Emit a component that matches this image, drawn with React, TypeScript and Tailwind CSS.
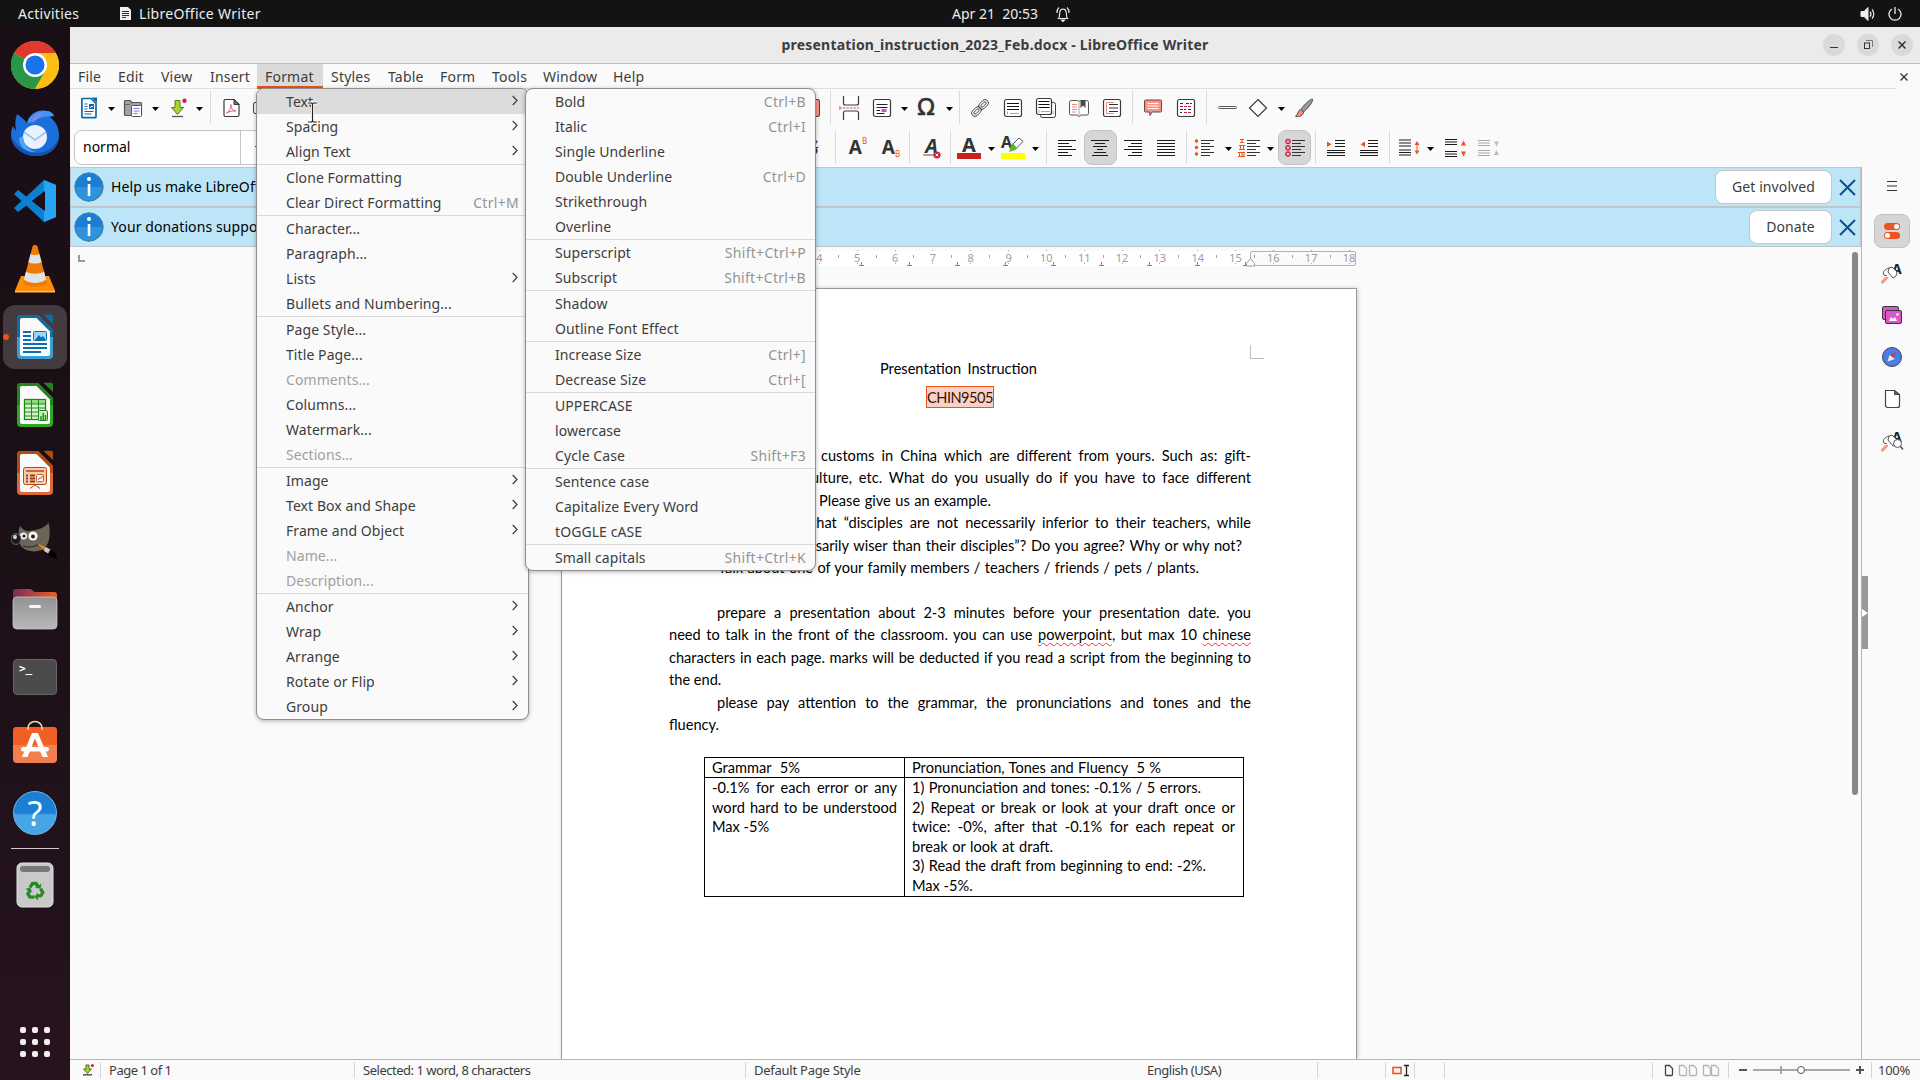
import type { ReactNode } from "react";

type Entry = { label: string; keys?: string; sub?: boolean; off?: boolean; on?: boolean };

const formatMenu: Entry[][] = [
  [
    { label: "Text", sub: true, on: true },
    { label: "Spacing", sub: true },
    { label: "Align Text", sub: true },
  ],
  [{ label: "Clone Formatting" }, { label: "Clear Direct Formatting", keys: "Ctrl+M" }],
  [
    { label: "Character..." },
    { label: "Paragraph..." },
    { label: "Lists", sub: true },
    { label: "Bullets and Numbering..." },
  ],
  [
    { label: "Page Style..." },
    { label: "Title Page..." },
    { label: "Comments...", off: true },
    { label: "Columns..." },
    { label: "Watermark..." },
    { label: "Sections...", off: true },
  ],
  [
    { label: "Image", sub: true },
    { label: "Text Box and Shape", sub: true },
    { label: "Frame and Object", sub: true },
    { label: "Name...", off: true },
    { label: "Description...", off: true },
  ],
  [
    { label: "Anchor", sub: true },
    { label: "Wrap", sub: true },
    { label: "Arrange", sub: true },
    { label: "Rotate or Flip", sub: true },
    { label: "Group", sub: true },
  ],
];

const textMenu: Entry[][] = [
  [
    { label: "Bold", keys: "Ctrl+B" },
    { label: "Italic", keys: "Ctrl+I" },
    { label: "Single Underline" },
    { label: "Double Underline", keys: "Ctrl+D" },
    { label: "Strikethrough" },
    { label: "Overline" },
  ],
  [
    { label: "Superscript", keys: "Shift+Ctrl+P" },
    { label: "Subscript", keys: "Shift+Ctrl+B" },
  ],
  [{ label: "Shadow" }, { label: "Outline Font Effect" }],
  [
    { label: "Increase Size", keys: "Ctrl+]" },
    { label: "Decrease Size", keys: "Ctrl+[" },
  ],
  [{ label: "UPPERCASE" }, { label: "lowercase" }, { label: "Cycle Case", keys: "Shift+F3" }],
  [{ label: "Sentence case" }, { label: "Capitalize Every Word" }, { label: "tOGGLE cASE" }],
  [{ label: "Small capitals", keys: "Shift+Ctrl+K" }],
];

function Menu({ groups, className }: { groups: Entry[][]; className: string }) {
  return (
    <div
      className={`absolute top-[88px] overflow-hidden rounded-lg border border-[#8f8f8f] bg-[#fafafa] shadow-[0_1px_4px_rgba(0,0,0,0.3)] ${className}`}
    >
      {groups.map((group, i) => (
        <div key={i} className={i > 0 ? "border-t border-[#d9d9d9]" : ""}>
          {group.map((item) => (
            <div
              key={item.label}
              className={`flex h-[25px] items-center justify-between pl-[29px] pr-[9px] ${
                item.on ? "bg-[#dcdcdc]" : ""
              } ${item.off ? "text-[#a0a0a0]" : ""}`}
            >
              <span className="tracking-[0.080px]">{item.label}</span>
              {item.keys && <span className="tracking-[0.300px] text-[#949494]">{item.keys}</span>}
              {item.sub && (
                <svg width="6" height="11" className="mb-[2px] mr-px" fill="none" stroke="#3d3d3d" strokeWidth="1.2">
                  <path d="M.7 1 5 5.500.7 10" />
                </svg>
              )}
            </div>
          ))}
        </div>
      ))}
    </div>
  );
}

/* ---------- toolbar pieces ---------- */

function Slot({ className, children }: { className: string; children?: ReactNode }) {
  return <div className={`flex h-full shrink-0 items-center justify-center ${className}`}>{children}</div>;
}

const Sep = () => <div className="h-[33px] w-px shrink-0 bg-[#dadada]" />;

function Drop({ className }: { className: string }) {
  return (
    <Slot className={className}>
      <svg width="7" height="4" className="mt-[3px] shrink-0">
        <path d="M0 0h7L3.500 4z" fill="#000" />
      </svg>
    </Slot>
  );
}

function Ico({ children, w = 20, h = 20 }: { children: ReactNode; w?: number; h?: number }) {
  return (
    <svg width={w} height={h} viewBox={`0 0 ${w} ${h}`} fill="none" className="shrink-0">
      {children}
    </svg>
  );
}

const ink = "#3a3a3a";

const Frame = () => <rect x="1.500" y="1.500" width="17" height="17" rx="2" fill="#fff" stroke={ink} strokeWidth="1.200" />;

const PdfIcon = () => (
  <Ico>
    <path d="M4 1.500h9l5 5V17a1.500 1.500 0 0 1-1.500 1.500h-12A1.500 1.500 0 0 1 3 17V3a1.500 1.500 0 0 1 1-1.500z" fill="#fff" stroke={ink} strokeWidth="1.200" />
    <path d="M13 1.500v5h5z" fill="#777" stroke={ink} />
    <path d="M5.500 15c2-1 5-5 4.500-8.500-.8 3 1.500 6 5 6.500-3-.5-6.500.3-9.500 2z" stroke="#e8556d" />
  </Ico>
);

const WriterDoc = () => (
  <Ico w={18} h={22}>
    <path d="M2.500 1.500h8.500l5 5V20a.6.6 0 0 1-.6.6H2.500a.6.6 0 0 1-.6-.6V2.100a.6.6 0 0 1 .6-.6z" fill="#fff" stroke="#0a6aa8" strokeWidth="1.700" />
    <path d="M11.500.5H17v5.800z" fill="#0a6aa8" />
    <path d="M4.500 7h3M4.500 9.500h3M4.500 12h3M4.500 14.500h9M4.500 17h7" stroke="#0a6aa8" strokeWidth="1.200" />
    <rect x="9" y="7" width="5" height="5" fill="#0a6aa8" />
    <path d="M10 11l2-2 1 1" stroke="#fff" />
  </Ico>
);

const FolderIcon = () => (
  <Ico>
    <path d="M1.500 16.500v-13a1 1 0 0 1 1-1H7l2 2h8.500a1 1 0 0 1 1 1v11a1 1 0 0 1-1 1h-15a1 1 0 0 1-1-1z" fill="#a3a3a3" stroke="#555" strokeWidth="1.200" />
    <path d="M2 6.500h5l2-2" stroke="#666" />
    <rect x="8.500" y="7.500" width="10" height="11" rx="1" fill="#fff" stroke="#555" />
    <path d="M10.500 10.500h6M10.500 13h6M10.500 15.500h4" stroke="#8079d8" />
  </Ico>
);

const SaveIcon = () => (
  <Ico w={18} h={20}>
    <path d="M5 2.500h5v7h3.500l-6 7-6-7H5z" fill="#a6d52c" stroke="#567a22" strokeWidth="1" />
    <path d="M2 18.500h11" stroke="#555" strokeWidth="1.300" />
    <circle cx="14.500" cy="2.700" r="2.200" fill="#d1203f" />
  </Ico>
);

const BreakIcon = () => (
  <Ico w={22} h={26}>
    <path d="M5.500 1v7a2 2 0 0 0 2 2h11a2 2 0 0 0 2-2V1M5.500 25v-7a2 2 0 0 1 2-2h11a2 2 0 0 1 2 2v7" fill="#fff" stroke={ink} strokeWidth="1.200" />
    <path d="M5 13h16" stroke="#c45fae" strokeDasharray="2.500 1" />
    <path d="M1 10.500v5l3.500-2.500z" fill="#ec8ad8" />
  </Ico>
);

const FieldIcon = () => (
  <Ico>
    <Frame />
    <path d="M4.500 6.500h11M4.500 9.500h11M4.500 12.500h3.500M4.500 15.500h8" stroke="#222" />
    <rect x="9.500" y="11" width="5" height="3" fill="#d54fc4" />
  </Ico>
);

const LinkIcon = () => (
  <Ico>
    <g stroke={ink} strokeWidth=".9" transform="rotate(-45 10 10)">
      <rect x="-.5" y="6.700" width="11" height="6.600" rx="3.300" />
      <rect x="1.800" y="8.800" width="6.500" height="2.400" rx="1.200" />
      <rect x="9.500" y="6.700" width="11" height="6.600" rx="3.300" />
      <rect x="11.700" y="8.800" width="6.500" height="2.400" rx="1.200" />
    </g>
  </Ico>
);

const FootnoteIcon = () => (
  <Ico>
    <Frame />
    <path d="M4 5.500h12M4 8.500h12M4 11.500h12" stroke="#111" strokeWidth="1.200" />
    <path d="M4.500 13.500v3M7 15.500h9" stroke="#f08a7a" />
  </Ico>
);

const EndnoteIcon = () => (
  <Ico w={22} h={22}>
    <rect x="5.500" y="5.500" width="15" height="15" rx="2" fill="#fff" stroke={ink} />
    <rect x="1.500" y="1.500" width="15" height="16" rx="2" fill="#fff" stroke={ink} strokeWidth="1.200" />
    <path d="M3.500 4.500h11M3.500 7.500h11M3.500 10.500h11" stroke="#111" strokeWidth="1.200" />
    <path d="M4 13v3M6 14.500h9M18 14v3" stroke="#f08a7a" />
  </Ico>
);

const BookmarkIcon = () => (
  <Ico w={22} h={20}>
    <path d="M3.500 2.500h6l1.500 1 1.500-1h6a2 2 0 0 1 2 2v11a1.500 1.500 0 0 1-1.500 1.500h-6l-2 1.500L9 17H3a1.500 1.500 0 0 1-1.500-1.500v-11a2 2 0 0 1 2-2z" fill="#fff" stroke="#555" />
    <path d="M11 4v13" stroke="#aaa" />
    <path d="M4 6.500h5M4 9h5M4 11.500h5M4 14h4" stroke="#f08a7a" />
    <path d="M12.500 2h5v8L15 7.500 12.500 10z" fill="#4a4a4a" />
  </Ico>
);

const XrefIcon = () => (
  <Ico>
    <Frame />
    <path d="M7 6.500h9M7 10h9M7 13.500h9" stroke="#333" />
    <path d="M12 4.500H4.500v11H12" stroke="#f08a7a" />
  </Ico>
);

const CommentIcon = () => (
  <Ico>
    <path d="M2.500 2h15a1 1 0 0 1 1 1v10a1 1 0 0 1-1 1H9l-2 3.500L6.500 14h-4a1 1 0 0 1-1-1V3a1 1 0 0 1 1-1z" fill="#fa9385" stroke="#6b4a45" />
    <path d="M4.500 5.500h11M4.500 8h11M4.500 10.500h11" stroke="#fff" />
  </Ico>
);

const TrackIcon = () => (
  <Ico>
    <Frame />
    <path d="M4 5.500h4M10 5.500h6M4 11.500h6M12 11.500h4M4 14.500h2" stroke="#333" strokeDasharray="3 1" />
    <path d="M4 8.500h3M8 8.500h8M8 14.500h7" stroke="#c8203f" strokeDasharray="3 1" />
  </Ico>
);

const DiamondIcon = () => (
  <Ico>
    <path d="M10 1.500 18.500 10 10 18.500 1.500 10z" fill="#fff" stroke={ink} strokeWidth="1.200" />
  </Ico>
);

const BrushIcon = () => (
  <Ico>
    <path d="M18.500 1c-3 0-10.500 8-11.500 10.500L9.500 14C12.500 12 19.500 4 18.500 1z" fill="#999" stroke="#555" />
    <path d="M6.800 11.500c-3 .5-2.300 4-5.300 7 4 .5 8-1 8-4.500z" fill="#fa8a78" stroke="#555" />
  </Ico>
);

const lines: Record<string, string> = {
  left: "M1 2.500h18M1 5.500h11M1 8.500h14M1 11.500h18M1 14.500h10M1 17.500h14",
  center: "M1 2.500h18M5 5.500h10M3 8.500h14M7 11.500h6M4 14.500h12M2 17.500h16",
  right: "M1 2.500h18M8 5.500h11M5 8.500h14M1 11.500h18M9 14.500h10M5 17.500h14",
  full: "M1 2.500h18M1 5.500h18M1 8.500h18M1 11.500h18M1 14.500h18M1 17.500h18",
};

const Align = ({ kind }: { kind: string }) => (
  <Ico>
    <path d={lines[kind]} stroke="#1b1b1b" strokeWidth="1.200" />
  </Ico>
);

const ListLines = () => (
  <path d="M8 2.500h13M8 5.500h9M8 8.500h13M8 11.500h9M8 14.500h13M8 17.500h9" stroke="#333" strokeWidth="1.100" />
);

const BulletIcon = () => (
  <Ico w={22}>
    <ListLines />
    {[3, 9.500, 16].map((y) => (
      <circle key={y} cx="3.500" cy={y} r="1.700" fill="#e95420" />
    ))}
  </Ico>
);

const NumberIcon = () => (
  <Ico w={24}>
    <g transform="translate(2 0)">
      <ListLines />
    </g>
    <path d="M3 1.500h4M5 1.500v3M3 4.500h4M2 7.500h6M3.500 7.500v4M6.500 7.500v4M2 11.500h6M1 14.500h7M2.500 14.500v4M5 14.500v4M7 14.500v4M1 18.500h7" stroke="#e95420" />
  </Ico>
);

const NoListIcon = () => (
  <Ico w={22}>
    <ListLines />
    {[3.500, 9.700, 16].map((y) => (
      <g key={y}>
        <circle cx="4" cy={y} r="2.800" fill="#d1203f" />
        <path d={`M2.700 ${y - 1.300}l2.600 2.600M5.300 ${y - 1.300}l-2.600 2.600`} stroke="#fff" strokeWidth=".9" />
      </g>
    ))}
  </Ico>
);

const IndentIcon = ({ back }: { back?: boolean }) => (
  <Ico>
    <path d="M9 2.500h10M9 5.500h10M9 8.500h10M1 12.500h18M1 14.700h18M1 17.500h18" stroke="#1b1b1b" strokeWidth="1.200" />
    <path d={back ? "M6 3.500v5.500L1.500 6.200z" : "M1 3.500v5.500L5.500 6.200z"} fill="#e95420" />
  </Ico>
);

const LineSpaceIcon = () => (
  <Ico w={22}>
    <path d="M1 2h12M1 5h12M1 8h12M1 12h12M1 14.500h12M1 17h12" stroke="#1b1b1b" strokeWidth="1.200" />
    <path d="M19 5v9" stroke="#e95420" />
    <path d="M16.500 7 19 3l2.500 4zM16.500 12.500 19 16.500l2.500-4z" fill="#e95420" />
  </Ico>
);

const ParaIcon = ({ off }: { off?: boolean }) => (
  <Ico w={22}>
    <path
      d={off ? "M1 2.500h12M1 5h12M1 7.500h12M1 12.500h12M1 15h12M1 17.500h12" : "M1 1.500h12M1 4h12M1 6.500h12M1 13.500h12M1 16h12M1 18.500h12"}
      stroke={off ? "#a8a8a8" : "#1b1b1b"}
      strokeWidth="1.200"
    />
    <path
      d={off ? "M17 3.500h5l-2.500 5zM17 17h5l-2.500-5z" : "M17 7.500h5L19.500 2.500zM17 13.500h5l-2.500 5z"}
      fill={off ? "#bdbdbd" : "#e95420"}
    />
  </Ico>
);

const ClearFormatIcon = () => (
  <div className="relative flex h-[22px] w-[18px] items-start justify-center">
    <span className="text-[20px] font-bold italic leading-[18px] text-[#333]">A</span>
    <svg width="18" height="8" className="absolute bottom-0 left-0">
      <path d="M0 4h12" stroke="#555" />
      <circle cx="14" cy="4" r="3.600" fill="#d1203f" />
      <path d="m12.600 2.600 2.800 2.800m0-2.800-2.800 2.800" stroke="#fff" />
    </svg>
  </div>
);

function StandardBar() {
  return (
    <div className="flex h-[39px] items-center pb-[2px] pl-2">
      <Slot className="w-[22px]"><WriterDoc /></Slot>
      <Drop className="w-[23px]" />
      <Slot className="w-[20px]"><FolderIcon /></Slot>
      <Drop className="w-[25px]" />
      <Slot className="w-[21px]"><SaveIcon /></Slot>
      <Drop className="w-[21px]" />
      <Sep />
      <Slot className="w-[40px]"><PdfIcon /></Slot>
      <Slot className="mr-[525px] w-[20px] pl-1">
        <div className="h-3 w-5 shrink-0 rounded-xs border border-[#444]" />
      </Slot>
      <div className="ml-1 mr-[10px] h-[18px] w-5 shrink-0 rounded-xs border border-[#444] bg-[#fa9385]" />
      <Sep />
      <Slot className="w-[36px]"><BreakIcon /></Slot>
      <Slot className="w-[30px]"><FieldIcon /></Slot>
      <Drop className="w-[15px]" />
      <Slot className="w-[28px]">
        <span className="font-['DejaVu_Sans'] text-[23px] leading-none text-[#333] [-webkit-text-stroke:0.700px_#333]">Ω</span>
      </Slot>
      <Drop className="w-[19px]" />
      <Sep />
      <Slot className="w-[40px]"><LinkIcon /></Slot>
      <Slot className="w-[26px]"><FootnoteIcon /></Slot>
      <Slot className="w-[40px]"><EndnoteIcon /></Slot>
      <Slot className="w-[26px]"><BookmarkIcon /></Slot>
      <Slot className="w-[40px]"><XrefIcon /></Slot>
      <Sep />
      <Slot className="w-[40px]"><CommentIcon /></Slot>
      <Slot className="mr-[7px] w-[26px]"><TrackIcon /></Slot>
      <Sep />
      <Slot className="w-[40px]">
        <div className="h-[3px] w-[19px] rounded-full border border-[#555] bg-white" />
      </Slot>
      <Slot className="w-[22px]"><DiamondIcon /></Slot>
      <Drop className="w-[24px]" />
      <Slot className="w-[22px]"><BrushIcon /></Slot>
    </div>
  );
}

function FormattingBar() {
  return (
    <div className="flex h-[39px] items-center pl-1">
      <div className="flex h-[35px] w-[728px] shrink-0 items-center">
        <div className="flex h-[35px] w-[200px] items-center rounded-lg border border-[#c4c4c4] bg-white text-black">
          <span className="w-[165px] pb-[2px] pl-2">normal</span>
          <div className="flex h-full items-center border-l border-[#c4c4c4] pl-[13px]">
            <svg width="10" height="6" fill="none" stroke="#444">
              <path d="m1 1 4 4 4-4" />
            </svg>
          </div>
        </div>
      </div>
      <Slot className="mr-[12px] w-[21px]">
        <span className="text-[21px] font-bold leading-none text-[#333] line-through decoration-1">S</span>
      </Slot>
      <Sep />
      <Slot className="w-[44px]">
        <span className="text-[19px] font-bold leading-none text-[#333]">A</span>
        <span className="mb-[13px] text-[8px] leading-none text-[#e95420]">B</span>
      </Slot>
      <Slot className="mr-[7px] w-[22px]">
        <span className="text-[19px] font-bold leading-none text-[#333]">A</span>
        <span className="mt-[13px] text-[8px] leading-none text-[#e95420]">B</span>
      </Slot>
      <Sep />
      <Slot className="ml-[3px] w-[37px]"><ClearFormatIcon /></Slot>
      <Sep />
      <Slot className="w-[36px] flex-col">
        <span className="text-[20px] font-bold leading-[17px] text-[#333]">A</span>
        <div className="h-[6px] w-[24px] bg-[#c9211e]" />
      </Slot>
      <Drop className="w-[9px]" />
      <Slot className="w-[34px] flex-col">
        <div className="flex h-[17px] w-[24px]">
          <span className="text-[16px] font-bold leading-[13px] text-[#333]">A</span>
          <svg width="16" height="17" className="-ml-1">
            <path d="M1 16 3 9l4 5z" fill="#63b52c" />
            <path d="M3.500 9.500 11 2l4 3.500-8 8z" fill="#fff" stroke="#555" />
            <path d="m3 9 4 5 2-2-4-5z" fill="#63b52c" />
          </svg>
        </div>
        <div className="h-[6px] w-[24px] bg-[#ffff00]" />
      </Slot>
      <Drop className="mr-[6px] w-[10px]" />
      <Sep />
      <Slot className="ml-[4px] w-[32px]"><Align kind="left" /></Slot>
      <Slot className="w-[34px]">
        <div className="flex h-[35px] w-[33px] items-center justify-center rounded-lg border border-[#c2c2c2] bg-[#d6d6d6]">
          <Align kind="center" />
        </div>
      </Slot>
      <Slot className="w-[32px]"><Align kind="right" /></Slot>
      <Slot className="mr-[3px] w-[34px]"><Align kind="full" /></Slot>
      <Sep />
      <Slot className="w-[34px]"><BulletIcon /></Slot>
      <Drop className="w-[14px]" />
      <Slot className="w-[28px]"><NumberIcon /></Slot>
      <Drop className="w-[15px]" />
      <Slot className="mr-[4px] w-[33px]">
        <div className="flex h-[35px] w-[33px] items-center justify-center rounded-lg border border-[#c2c2c2] bg-[#d6d6d6]">
          <NoListIcon />
        </div>
      </Slot>
      <Sep />
      <Slot className="w-[40px]"><IndentIcon /></Slot>
      <Slot className="mr-[7px] w-[26px]"><IndentIcon back /></Slot>
      <Sep />
      <Slot className="w-[37px]"><LineSpaceIcon /></Slot>
      <Drop className="w-[7px]" />
      <Slot className="w-[42px]"><ParaIcon /></Slot>
      <Slot className="w-[23px]"><ParaIcon off /></Slot>
    </div>
  );
}

/* ---------- dock ---------- */

function DockItem({ children, active }: { children: ReactNode; active?: boolean }) {
  return (
    <div className="flex h-[68px] shrink-0 items-center justify-center">
      <div className={`relative flex h-16 w-16 items-center justify-center rounded-xl ${active ? "bg-[#433b40]" : ""}`}>
        {active && <span className="absolute left-0 h-[6px] w-[6px] rounded-full bg-[#e95420]" />}
        {children}
      </div>
    </div>
  );
}

const Chrome = () => (
  <svg width="48" height="48" viewBox="0 0 48 48">
    <circle cx="24" cy="24" r="24" fill="#fbbc05" />
    <path d="M24 24 3.200 12A24 24 0 0 1 44.800 12z" fill="#df3a2d" />
    <path d="M24 24 3.200 12A24 24 0 0 0 24 48l10.400-18z" fill="#2a9648" />
    <path d="M24 12h20.800A24 24 0 0 1 24 48l10.400-18z" fill="#fbbf12" />
    <circle cx="24" cy="24" r="12" fill="#fff" />
    <circle cx="24" cy="24" r="9.500" fill="#1a73e8" />
  </svg>
);

const Thunderbird = () => (
  <svg width="48" height="48" viewBox="0 0 48 48">
    <path d="M6 5c4 3 8 6 10 9C18 5 27 0 35 2c4 0 7 2 8 5l-4 1c6 5 9 11 9 18 0 13-10 21-23 21S0 38 0 26c0-4 1-7 2-9l3 5C4 15 4 10 6 5z" fill="#1b6fd8" />
    <path d="M16 14C19 5 27 1 35 2c4 0 7 2 8 5-7 0-16 1-20 6z" fill="#3f97f5" />
    <path d="M20 12c3-6 8-8 12-8-3 2-5 5-7 7z" fill="#9a7fe6" />
    <path d="M0 26c4 10 12 17 24 18 12 0 20-6 23-14-1 10-10 17-22 17S1 39 0 26z" fill="#1550b4" />
    <circle cx="24" cy="28" r="12" fill="#e9f1fc" />
    <path d="m13 23 11 8 11-8" fill="none" stroke="#9fc4ee" strokeWidth="1.600" />
    <path d="M12 27c0 8 5 14 13 16-9 1-17-5-17-14z" fill="#4ea5f7" />
  </svg>
);

const VsCode = () => (
  <svg width="44" height="44" viewBox="0 0 44 44">
    <path d="m31 1 12 5v32l-12 5L1 15l4-4 27 21V12L5 33l-4-4z" fill="#0b7fd0" />
    <path d="m31 1 12 5v32l-12 5z" fill="#27a4f2" />
    <path d="M32 12v20L19 22z" fill="#1c0f17" />
  </svg>
);

const Vlc = () => (
  <svg width="44" height="48" viewBox="0 0 44 48">
    <path d="M8 31h28l6 14.500a1 1 0 0 1-1 1.500H3a1 1 0 0 1-1-1.500z" fill="#ff8d0a" />
    <path d="M2 46h40v1.500H2z" fill="#ffc24a" />
    <path d="M19.500 1.500c.5-2 4.500-2 5 0L34 38c-3 5-21 5-24 0z" fill="#f07a08" />
    <path d="m17.600 9-2.200 8c3 2 10.200 2 13.200 0l-2.200-8c-2 1.300-6.800 1.300-8.800 0zM13 26.500l-2.100 8c5 4.500 17.200 4.500 22.200 0l-2.100-8c-4 3-14 3-18 0z" fill="#dfe3e6" />
  </svg>
);

function OfficeDoc({ dark, light, children }: { dark: string; light: string; children: ReactNode }) {
  return (
    <svg width="38" height="46" viewBox="0 0 38 46">
      <path d="M5 1h17l15 15v25a4 4 0 0 1-4 4H5a4 4 0 0 1-4-4V5a4 4 0 0 1 4-4z" fill={light} />
      <path d="M5 1h17l15 15v7H1V5a4 4 0 0 1 4-4z" fill={dark} />
      <path d="M6 4h14.500L34 17.500V40a2 2 0 0 1-2 2H6a2 2 0 0 1-2-2V6a2 2 0 0 1 2-2z" fill="#fafafa" />
      <path d="M27.500.8H35A2 2 0 0 1 37 3v7z" fill={dark} />
      {children}
    </svg>
  );
}

const Gimp = () => (
  <svg width="48" height="40" viewBox="0 0 48 40">
    <path d="M9 5c2 3 5 5 9 5 9-1 16-3 19.500-8.500C40 12 39 25 31 29c-8 3-17 1-21-4-3-6-3-14-1-20z" fill="#6b6557" />
    <circle cx="12.500" cy="15" r="3.600" fill="#f0f0f0" />
    <circle cx="22" cy="15" r="4.600" fill="#f7f7f7" />
    <circle cx="13" cy="15" r="1.600" fill="#222" />
    <circle cx="22" cy="15.500" r="2" fill="#222" />
    <ellipse cx="5" cy="18" rx="5" ry="5.500" fill="#1a1a1a" stroke="#777" strokeWidth=".8" />
    <ellipse cx="4" cy="16" rx="2" ry="2.300" fill="#c9d3d6" />
    <path d="M12 25c6 2 11 1 16-2" stroke="#222" fill="none" />
    <path d="m26 22 10 5-2 3.500z" fill="#e58a1f" />
    <path d="m35 26 5 3-2 4-5-3z" fill="#c9c9c9" />
    <path d="M39 29c5 1 7 5 7 9-4-1-8-2-9-5z" fill="#000" />
  </svg>
);

const Files = () => (
  <svg width="46" height="42" viewBox="0 0 46 42">
    <defs>
      <linearGradient id="folderTab">
        <stop offset="0" stopColor="#7a2b5e" />
        <stop offset="1" stopColor="#f05f24" />
      </linearGradient>
      <linearGradient id="folderFront" x2="0" y2="1">
        <stop offset="0" stopColor="#929292" />
        <stop offset="1" stopColor="#b8b8b8" />
      </linearGradient>
    </defs>
    <path d="M1 14V4a3 3 0 0 1 3-3h14c2 0 3 3 5 3h19a3 3 0 0 1 3 3v9z" fill="url(#folderTab)" />
    <rect x="1" y="9" width="44" height="32" rx="4" fill="url(#folderFront)" stroke="#c6c6c6" strokeWidth=".8" />
    <rect x="17" y="17" width="12" height="3" rx="1.500" fill="#f5f5f5" />
  </svg>
);

const Software = () => (
  <svg width="46" height="44" viewBox="0 0 46 44" className="mb-1.5">
    <rect x="1" y="7" width="44" height="36" rx="4" fill="#f27f4d" />
    <path d="M1 25V11a4 4 0 0 1 4-4h36a4 4 0 0 1 4 4v14z" fill="#f05f26" />
    <path d="M16 10V8a7 6.500 0 0 1 14 0v2" fill="none" stroke="#f8d9a2" strokeWidth="1.500" />
    <path d="M20 13h6l10 24h-5.500L23 18.500 15.500 37H10z" fill="#fff" />
    <rect x="9" y="27" width="28" height="4.500" rx="2.200" fill="#fff" />
  </svg>
);

const Trash = () => (
  <svg width="38" height="46" viewBox="0 0 38 46" className="mt-[3px]">
    <rect x="1" y="1" width="36" height="44" rx="5" fill="#c9c9c9" stroke="#e2e2e2" />
    <rect x="4" y="4" width="30" height="6" rx="3" fill="#777" />
    <g transform="translate(19 29)" fill="none" stroke="#258a1f" strokeWidth="4">
      {[0, 120, 240].map((a) => (
        <g key={a} transform={`rotate(${a})`}>
          <path d="M-5-3.500-2.500-7.500h3.500L3-4.500" strokeWidth="3.300" />
          <path d="m0-3 5.500.500L6.500-7.500z" fill="#258a1f" stroke="none" />
        </g>
      ))}
    </g>
  </svg>
);

function Dock() {
  return (
    <div className="flex w-[70px] shrink-0 flex-col bg-linear-to-b from-[#1a0e16] via-[#1c1017] to-[#26131e] pt-1">
      <DockItem><Chrome /></DockItem>
      <DockItem><Thunderbird /></DockItem>
      <DockItem><VsCode /></DockItem>
      <DockItem><Vlc /></DockItem>
      <DockItem active>
        <OfficeDoc dark="#0f6ba8" light="#3a9fd2">
          <path d="M7 18h8M7 22h8M7 26h8M7 30h24M7 34h24M7 38h18" stroke="#0a6fb3" strokeWidth="1.800" />
          <rect x="17.500" y="17.500" width="13" height="9" rx="1" fill="#9fd5f2" stroke="#0a6fb3" />
          <path d="m19 26 4-5 2 2.500 2-1.500 3 4z" fill="#0a6fb3" />
        </OfficeDoc>
      </DockItem>
      <DockItem>
        <OfficeDoc dark="#23861a" light="#2fa723">
          <rect x="8.500" y="17.500" width="21" height="20" fill="#d5f5ca" stroke="#23861a" strokeWidth="1.300" />
          <path d="M9 18h20v4H9z" fill="#8edb7c" />
          <path d="M8 22h22M8 26h22M8 30h22M8 34h22M15.500 17v20M22.500 17v20" stroke="#23861a" />
          <rect x="22.500" y="28.500" width="9" height="10" rx="1" fill="#c4efb8" stroke="#23861a" />
          <path d="M25 38v-4M27.200 38v-7M29.500 38v-5" stroke="#23861a" strokeWidth="1.400" />
        </OfficeDoc>
      </DockItem>
      <DockItem>
        <OfficeDoc dark="#b54a12" light="#dd6a35">
          <rect x="7.500" y="17.500" width="23" height="17" rx="2" fill="#f1cdb8" stroke="#b54a12" />
          <path d="M10 21h18" stroke="#d4622a" strokeWidth="2" />
          <path d="M10 25.500h2M10 28.500h2M10 31.500h2M14 25.500h5M14 28.500h5M14 31.500h5" stroke="#9a3c0c" strokeWidth="1.800" />
          <rect x="20.500" y="24.500" width="7" height="7" rx="1" fill="#fff" stroke="#d4622a" />
          <path d="m22 30 2-2.500 1 1 2-3M14 38.500l5-3.500 5 3.500" stroke="#b54a12" fill="none" />
        </OfficeDoc>
      </DockItem>
      <DockItem><Gimp /></DockItem>
      <DockItem><Files /></DockItem>
      <DockItem>
        <div className="h-9 w-11 rounded-[4px] border border-[#666] bg-[#4b4b4b] pl-[5px] pt-[2px] font-['DejaVu_Sans_Mono'] text-[11px] font-bold leading-[14px] text-white">
          &gt;_
        </div>
      </DockItem>
      <DockItem><Software /></DockItem>
      <DockItem>
        <div className="flex h-11 w-11 items-center justify-center rounded-full border border-[#6db9ee] bg-linear-to-b from-[#1c7fd6] from-50% to-[#46a5e4] to-55% font-['Noto_Sans'] text-[34px] leading-none text-white">
          ?
        </div>
      </DockItem>
      <div className="mx-auto mt-px h-px w-12 bg-[#cfcacd]" />
      <DockItem><Trash /></DockItem>
      <div className="mx-5 mb-[23px] mt-auto grid h-[30px] grid-cols-3 gap-[6px]">
        {Array.from({ length: 9 }, (_, i) => (
          <span key={i} className="h-[6px] w-[6px] rounded-[2px] bg-[#f2efed]" />
        ))}
      </div>
    </div>
  );
}

/* ---------- info bars, ruler, document ---------- */

function InfoBar({ text, action, width }: { text: string; action: string; width: string }) {
  return (
    <div className="flex h-10 items-center border border-[#c3c6c8] bg-[#bce5f7] pl-[3px] pr-[4px] text-black">
      <svg width="30" height="30" viewBox="0 0 30 30">
        <circle cx="15" cy="15" r="14.200" fill="#2f92dc" stroke="#41799f" />
        <path d="M1.500 15a13.500 13.500 0 0 1 27 0z" fill="#1c7ed2" />
        <path d="M15 12v12" stroke="#fff" strokeWidth="2.600" />
        <circle cx="15" cy="7" r="2" fill="#fff" />
      </svg>
      <span className="ml-[7px] tracking-[0.100px]">{text}</span>
      <div className={`ml-auto flex h-[34px] items-center justify-center rounded-lg border border-[#c6c6c6] bg-white tracking-[0.100px] text-[#3d3d3d] ${width}`}>
        {action}
      </div>
      <svg width="17" height="17" className="ml-[7px]" stroke="#0b4f8c" strokeWidth="2">
        <path d="m1 1 15 15M16 1 1 16" />
      </svg>
    </div>
  );
}

function Ruler() {
  return (
    <div className="relative flex h-[41px] pl-[492px] pt-[4px]">
      <svg width="7" height="7" className="absolute left-2 top-[8px]">
        <path d="M1 0v6h6" fill="none" stroke="#999" strokeWidth="2" />
      </svg>
      <div className="h-[15px] w-[688px] bg-white" />
      <div className="h-[15px] w-[106px] rounded-xs border border-[#b3b3b3]" />
      <div className="absolute left-[617px] top-[3px] flex text-[11px] leading-[15px] text-[#9d9d9d]">
        {Array.from({ length: 18 }, (_, i) => (
          <span key={i} className="w-[37.830px] text-center">
            {i + 1}
          </span>
        ))}
      </div>
      <svg width="1300" height="18" className="absolute left-0 top-[3px]" stroke="#a5a5a5">
        {Array.from({ length: 18 }, (_, i) => (
          <path key={i} d={`M${Math.round(616.500 + i * 37.830) + 0.500} 5v3M${Math.round(635.500 + i * 37.830) + 0.500} 0v1m0 12v1`} />
        ))}
        {Array.from({ length: 11 }, (_, i) => (
          <path key={i} d={`M${Math.round(694.500 + i * 48) + 0.500} 12v3.500m-2.500 0h5`} stroke="#888" />
        ))}
        <path d="M1176.500 16v-2.500l4-5 4 5V16z" fill="#fff" stroke="#999" />
      </svg>
    </div>
  );
}

/* One typeset line, stretched to its box. */
function Line({ children, className = "" }: { children: ReactNode; className?: string }) {
  return <div className={`h-[22.440px] whitespace-nowrap [text-align-last:justify] ${className}`}>{children}</div>;
}

const Typo = ({ children }: { children: ReactNode }) => (
  <span className="underline decoration-[#f03030] decoration-wavy decoration-1 underline-offset-2">{children}</span>
);

function Page() {
  return (
    <div className="ml-[491px] h-[771px] w-[796px] border border-b-0 border-[#999] bg-white font-['Lato',sans-serif] text-[14.600px] leading-[22.440px] text-black shadow-[1px_0_4px_rgba(0,0,0,0.2)]">
      <div className="flex h-[70px] items-end justify-end pr-[92px]">
        <div className="h-[14px] w-[14px] border-b border-l border-[#bdbdbd]" />
      </div>
      <div className="-mt-px ml-[318px] w-[157px]">
        <Line>Presentation Instruction</Line>
      </div>
      <div className="ml-[364px] mt-[6px] h-[22px] w-[68px] border border-[#e95420] bg-[#f9d2c6] text-[#3c1205]">
        <div className="text-center tracking-[-0.500px]">CHIN9505</div>
      </div>
      <div className="ml-[107px] mt-[36.500px] flex w-[582px] flex-col items-end">
        <Line className="w-[430px]">customs in China which are different from yours. Such as: gift-</Line>
        <Line className="w-[447px]">culture, etc. What do you usually do if you have to face different</Line>
        <div className="flex w-[432px]">
          <Line className="w-[172px]">Please give us an example.</Line>
        </div>
        <Line className="w-[440px]">that “disciples are not necessarily inferior to their teachers, while</Line>
        <Line className="mr-[9px] w-[463px]">necessarily wiser than their disciples”? Do you agree? Why or why not?</Line>
        <Line className="mr-[52px] w-[481px]">Talk about one of your family members / teachers / friends / pets / plants.</Line>
        <Line className="mt-[22.440px] w-[534px]">prepare a presentation about 2-3 minutes before your presentation date. you</Line>
        <Line className="w-[582px]">
          need to talk in the front of the classroom. you can use <Typo>powerpoint</Typo>, but max 10 <Typo>chinese</Typo>
        </Line>
        <Line className="w-[582px]">
          characters in each page. marks will be deducted if you read a script from the beginning to
        </Line>
        <div className="flex w-[582px]">
          <Line className="w-[52px]">the end.</Line>
        </div>
        <Line className="w-[534px]">please pay attention to the grammar, the pronunciations and tones and the</Line>
        <div className="flex w-[582px]">
          <Line className="w-[50px]">fluency.</Line>
        </div>
      </div>
      <div className="ml-[142px] mt-[20.500px] grid w-[540px] grid-cols-[200px_338px] border border-black leading-[19.500px] [&_div]:whitespace-nowrap">
        <div className="h-[20px] border-b border-r border-black pl-[7px]">
          <div className="w-[88px] [text-align-last:justify]">Grammar&nbsp; 5%</div>
        </div>
        <div className="h-[20px] border-b border-black pl-[7px]">
          <div className="w-[249px] [text-align-last:justify]">Pronunciation, Tones and Fluency&nbsp; 5 %</div>
        </div>
        <div className="h-[118px] border-r border-black pl-[7px] [&>div]:[text-align-last:justify]">
          <div className="w-[185px]">-0.1% for each error or any</div>
          <div className="w-[185px]">word hard to be understood</div>
          <div className="w-[56px]">Max -5%</div>
        </div>
        <div className="h-[118px] pl-[7px] [&>div]:[text-align-last:justify]">
          <div className="w-[289px]">1) Pronunciation and tones: -0.1% / 5 errors.</div>
          <div className="w-[323px]">2) Repeat or break or look at your draft once or</div>
          <div className="w-[323px]">twice: -0%, after that -0.1% for each repeat or</div>
          <div className="w-[141px]">break or look at draft.</div>
          <div className="w-[294px]">3) Read the draft from beginning to end: -2%.</div>
          <div className="w-[60px]">Max -5%.</div>
        </div>
      </div>
    </div>
  );
}

/* ---------- sidebar & status bar ---------- */

const Roller = ({ lens }: { lens?: boolean }) => (
  <svg width="22" height="22" viewBox="0 0 22 22" fill="none" className="overflow-visible">
    <text x="11" y="11.500" fontSize="14" fontWeight="700" fill="#222" fontFamily="Noto Sans">A</text>
    <path d="m8 6 3-1 5 5-1 4-3 2-5-6z" fill="#fff" stroke="#555" />
    <path d="M8 6c-4 1-7 4-5 7l3 1" stroke="#555" />
    <path d="m5.500 16-4 4" stroke="#fa9385" strokeWidth="3" strokeLinecap="round" />
    {lens && (
      <>
        <circle cx="16.500" cy="13.500" r="4" fill="#fff" stroke="#555" />
        <path d="m19.500 16.500 2.500 3" stroke="#555" strokeWidth="1.500" />
      </>
    )}
  </svg>
);

function Sidebar() {
  return (
    <div className="relative flex w-[59px] shrink-0 flex-col items-center border-l border-[#b5b5b5] pl-px">
      <div className="absolute left-0 top-[409px] flex h-[73px] w-[6px] items-center bg-[#999]">
        <svg width="6" height="8"><path d="M0 0v8l6-4z" fill="#fff" /></svg>
      </div>
      <svg width="10" height="10" className="mb-[23px] mt-[14px]" stroke="#333">
        <path d="M0 .5h10M0 5h10M0 9.500h10" />
      </svg>
      <div className="flex h-[34px] w-9 items-center justify-center rounded-lg border border-[#c2c2c2] bg-[#d6d6d6]">
        <svg width="16" height="18">
          <rect y="1" width="16" height="7" rx="3.500" fill="#e95420" />
          <circle cx="12.500" cy="4.500" r="2.500" fill="#fff" />
          <rect y="10" width="16" height="7" rx="3.500" fill="#e95420" />
          <circle cx="3.500" cy="13.500" r="2.500" fill="#fff" />
        </svg>
      </div>
      <div className="flex flex-col items-center gap-5 pt-[14px]">
        <Roller />
        <svg width="22" height="22" viewBox="0 0 22 22" stroke={ink}>
          <rect x="1.500" y="2.500" width="16" height="13" rx="1.500" fill="#d957c8" />
          <rect x="4.500" y="6.500" width="16" height="13" rx="1.500" fill="#d957c8" />
          <path d="m8 17 2-4 2 2 2-2 2 4z" fill="#fff" stroke="none" />
          <circle cx="16.500" cy="10.500" r="1.200" fill="#fff" stroke="none" />
        </svg>
        <svg width="22" height="22" viewBox="0 0 22 22">
          <circle cx="11" cy="11" r="9.500" fill="#4a7de8" stroke="#444" />
          <path d="m15.500 6.500-7 3 3.500 3.500z" fill="#e0304a" />
          <path d="M6.500 15.500 8.500 9l5.500 4z" fill="#e8e8e8" />
        </svg>
        <svg width="22" height="22" viewBox="0 0 22 22" stroke="#444">
          <path d="M4.500 2.500h9l5 4v11a2 2 0 0 1-2 2h-10a2 2 0 0 1-2-2z" fill="#fff" strokeWidth="1.200" />
          <path d="M13.500 2.500v4h5z" fill="#666" />
        </svg>
        <Roller lens />
      </div>
    </div>
  );
}

const StatusSep = () => <div className="h-4 w-px shrink-0 bg-[#d6d6d6]" />;

const sheet = "M1.500 1.500h4l3 3v6a1 1 0 0 1-1 1h-5a1 1 0 0 1-1-1z";

function StatusBar() {
  return (
    <div className="flex h-[21px] shrink-0 items-center border-t border-[#b5b5b5] pl-[12px] text-[13px] tracking-[-0.480px]">
      <svg width="12" height="12" viewBox="0 0 12 12" className="mr-[6px]">
        <path d="M4 1h3v4h2.500L5.500 9.500 1.500 5H4z" fill="#a6d52c" stroke="#55702a" />
        <path d="M1 10.800h9" stroke="#555" strokeWidth="1.500" />
        <circle cx="10.400" cy="1.600" r="1.500" fill="#d1203f" />
      </svg>
      <StatusSep />
      <span className="w-[253px] pl-2">Page 1 of 1</span>
      <StatusSep />
      <span className="w-[390px] pl-2">Selected: 1 word, 8 characters</span>
      <StatusSep />
      <span className="w-[401px] pl-2 tracking-[-0.250px]">Default Page Style</span>
      <span className="w-[170px]">English (USA)</span>
      <StatusSep />
      <div className="w-[67px]" />
      <StatusSep />
      <svg width="28" height="14" viewBox="0 0 28 14" fill="none">
        <rect x="7" y="4.500" width="8" height="6" stroke="#e95420" strokeWidth="1.600" />
        <path d="M18 2.500h5M18 12.500h5M20.500 2.500v10" stroke="#222" strokeWidth="1.300" />
      </svg>
      <StatusSep />
      <div className="w-[29px]" />
      <StatusSep />
      <div className="w-[207px]" />
      <StatusSep />
      <svg width="75" height="13" viewBox="0 0 75 13" fill="none" strokeWidth="1.300">
        <path d={sheet} transform="translate(11 0)" stroke="#444" />
        <g stroke="#b4b4b4">
          <path d={sheet} transform="translate(25 0)" />
          <path d={sheet} transform="translate(35 0)" />
          <path d={sheet} transform="translate(49 0)" />
          <path d={sheet} transform="translate(57 0)" />
        </g>
      </svg>
      <StatusSep />
      <svg width="142" height="14" viewBox="0 0 142 14" stroke="#555">
        <path d="M10 7h8M127 7h8M131 3v8" strokeWidth="2" />
        <path d="M24 7h97M52 3v8" stroke="#8f8f8f" strokeWidth="1.500" />
        <circle cx="72" cy="7" r="3.500" fill="#fff" />
      </svg>
      <StatusSep />
      <span className="pl-[6px] tracking-[-0.300px]">100%</span>
    </div>
  );
}

function TopBar() {
  return (
    <div className="flex h-[27px] shrink-0 items-center bg-[#131313] tracking-[0.300px] text-[#ececec]">
      <span className="w-[119px] pl-[18px]">Activities</span>
      <svg width="13" height="15">
        <path d="M1 1h8l3 3v10H1z" fill="#f2f2f2" />
        <path d="M3 5.500h7M3 7.500h7M3 9.500h7M3 11.500h4" stroke="#333" />
      </svg>
      <span className="w-[820px] pl-[7px]">LibreOffice Writer</span>
      <span className="whitespace-pre tracking-normal">Apr 21  20:53</span>
      <svg width="14" height="16" viewBox="0 0 14 16" fill="none" stroke="#eee" strokeWidth="1.100" className="ml-[18px]">
        <path d="M2.500 12.500c1.500-1.500.8-4 1.300-6.500C4.200 3.700 5.500 3 7 3s2.800.7 3.200 3c.5 2.500-.2 5 1.300 6.500zM1 7c-.2-2 .3-4 2-5.500M13 7c.2-2-.3-4-2-5.500" />
        <path d="M5.500 14h3L7 15.500z" fill="#eee" />
      </svg>
      <svg width="16" height="16" viewBox="0 0 16 16" fill="none" stroke="#eee" className="ml-auto">
        <path d="M1 5.500h3l4-4v13l-4-4H1z" fill="#eee" />
        <path d="M10 5.500a4 4 0 0 1 0 5M12 3.500a6.500 6.500 0 0 1 0 9" strokeWidth="1.200" />
      </svg>
      <svg width="14" height="16" viewBox="0 0 14 16" fill="none" stroke="#eee" strokeWidth="1.300" className="ml-[12px] mr-[18px]">
        <path d="M7 1v7M4 3a6 6 0 1 0 6 0" />
      </svg>
    </div>
  );
}

function TitleBar() {
  const button = "flex h-[22px] w-[22px] items-center justify-center rounded-full bg-[#dadada]";
  return (
    <div className="flex h-[37px] items-center border-b border-[#bdbdbd] bg-[#ebebeb]">
      <div className="w-[120px]" />
      <div className="flex-1 text-center font-bold tracking-[0.200px]">presentation_instruction_2023_Feb.docx - LibreOffice Writer</div>
      <div className="flex w-[120px] justify-end gap-[12px] pb-px pr-[7px]">
        <div className={button}>
          <div className="mt-[5px] h-px w-2 bg-[#333]" />
        </div>
        <div className={button}>
          <svg width="9" height="9" fill="none" stroke="#333">
            <path d="M2 .5h6.500V7" stroke="#777" />
            <rect x=".5" y="3" width="5" height="5.500" />
          </svg>
        </div>
        <div className={button}>
          <svg width="8" height="8" stroke="#333" strokeWidth="1.500">
            <path d="m.5.5 7 7m0-7-7 7" />
          </svg>
        </div>
      </div>
    </div>
  );
}

function MenuBar() {
  return (
    <div className="flex h-[25px] items-center">
      <div className="flex h-full w-[1826px] items-center border-b border-[#dedede] tracking-[0.200px] *:flex *:h-[25px] *:items-center *:pl-2 *:pt-[2px]">
        <span className="w-[40px]">File</span>
        <span className="w-[43px]">Edit</span>
        <span className="w-[49px]">View</span>
        <span className="w-[55px]">Insert</span>
        <div className="w-[66px] border-b-3 border-[#e95420] bg-[#dadada]">
          <span className="pt-[2px]">Format</span>
        </div>
        <span className="w-[57px]">Styles</span>
        <span className="w-[52px]">Table</span>
        <span className="w-[52px]">Form</span>
        <span className="w-[51px]">Tools</span>
        <span className="w-[70px]">Window</span>
        <span className="w-[47px]">Help</span>
      </div>
      <svg width="8" height="8" className="ml-1" stroke="#333" strokeWidth="1.400">
        <path d="m.5.5 7 7m0-7-7 7" />
      </svg>
    </div>
  );
}

export default function App() {
  return (
    <div className="relative flex h-[1080px] w-[1920px] flex-col overflow-hidden bg-[#fafafa] font-['Noto_Sans',sans-serif] text-[14px] leading-[20px] text-[#3d3d3d]">
      <TopBar />
      <div className="flex min-h-0 flex-1">
        <Dock />
        <div className="flex min-w-0 flex-1 flex-col">
          <TitleBar />
          <MenuBar />
          <StandardBar />
          <FormattingBar />
          <div className="flex min-h-0 flex-1">
            <div className="relative min-w-0 flex-1 overflow-hidden">
              <InfoBar text="Help us make LibreOffice even better!" action="Get involved" width="w-[117px]" />
              <InfoBar text="Your donations support our worldwide community." action="Donate" width="w-[83px]" />
              <Ruler />
              <Page />
              <div className="absolute right-[3px] top-[85px] h-[543px] w-[6px] rounded-full bg-[#888]" />
            </div>
            <Sidebar />
          </div>
          <StatusBar />
        </div>
      </div>
      <Menu groups={formatMenu} className="left-[256px] w-[273px]" />
      <Menu groups={textMenu} className="left-[525px] w-[291px]" />
      <svg width="11" height="23" className="absolute left-[307px] top-[101px]" fill="none">
        <path d="M1 2h3.500l1 1 1-1H10M1 21h3.500l1-1 1 1H10M5.500 3v17" stroke="#fff" strokeWidth="3" />
        <path d="M1 2h3.500l1 1 1-1H10M1 21h3.500l1-1 1 1H10M5.500 3v17" stroke="#222" strokeWidth="1.200" />
      </svg>
    </div>
  );
}
